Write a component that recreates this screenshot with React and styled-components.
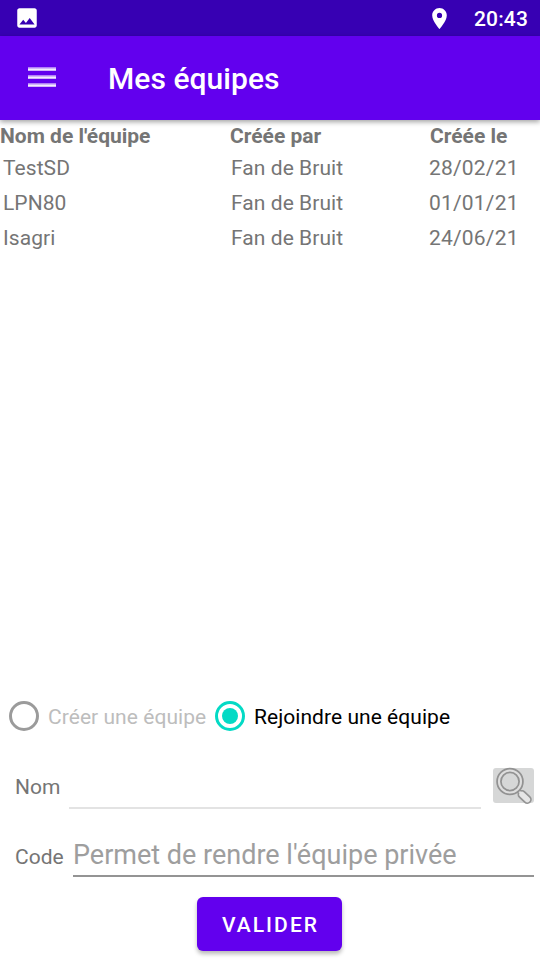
import React from 'react';
import styled, { createGlobalStyle } from 'styled-components';

const GlobalStyle = createGlobalStyle`
  * { box-sizing: border-box; }
  body { margin: 0; background: #fff; font-family: Roboto, sans-serif; }
`;

const Screen = styled.div`
  width: 540px;
  height: 960px;
  display: flex;
  flex-direction: column;
  overflow: hidden;
  background: #fff;
  color: #757575;
  font-size: 21px;
  line-height: 25px;
  white-space: nowrap;
`;

const StatusBar = styled.div`
  height: 36px;
  flex: none;
  display: flex;
  align-items: center;
  padding: 0 12px 0 14px;
  background: #3700b3;
  color: #fff;
`;

const StatusIcon = styled.svg`
  width: ${(p) => p.$size}px;
  height: ${(p) => p.$size}px;
  flex: none;
  fill: #fff;
  margin-left: ${(p) => (p.$end ? 'auto' : '0')};
`;

const Clock = styled.time`
  width: 54px;
  margin-left: 22px;
  padding-top: 2px;
  font-weight: 500;
  letter-spacing: 0.15px;
`;

const AppBar = styled.header`
  height: 84px;
  flex: none;
  display: flex;
  align-items: center;
  padding-left: 28px;
  background: #6200ee;
  box-shadow: 0 2px 5px rgba(0, 0, 0, 0.36);
  z-index: 1;
`;

const MenuIcon = styled.svg`
  width: 28px;
  height: 22px;
  margin-right: 52px;
`;

const Title = styled.h1`
  margin: 2px 0 0;
  color: #fff;
  font-size: 30px;
  line-height: 36px;
  font-weight: 500;
  letter-spacing: 0.05px;
`;

const Table = styled.section`
  flex: 1;
  padding-top: 4px;
`;

const Row = styled.div`
  display: grid;
  grid-template-columns: 228px 198px 1fr;
  height: 35px;
  padding: 5px 0 0 3px;
  letter-spacing: 0.06px;
`;

const DateCell = styled.span`
  letter-spacing: 0.2px;
`;

const HeaderRow = styled.div`
  display: grid;
  grid-template-columns: 230px 200px 1fr;
  height: 27px;
  font-weight: 700;
`;

const Form = styled.form`
  height: 270px;
  flex: none;
  display: flex;
  flex-direction: column;
`;

const RadioGroup = styled.div`
  height: 52px;
  display: flex;
  align-items: center;
  padding-left: 9px;
`;

const RadioOption = styled.div`
  width: ${(p) => p.$width}px;
  display: flex;
  align-items: center;
  gap: 9px;
  color: ${(p) => (p.$checked ? '#000' : '#bdbdbd')};
`;

const RadioText = styled.span`
  padding-top: 2px;
  letter-spacing: 0.05px;
`;

const RadioMark = styled.span`
  width: 30px;
  height: 30px;
  flex: none;
  display: grid;
  place-items: center;
  border: 3px solid ${(p) => (p.$checked ? '#03dac5' : '#9b9b9b')};
  border-radius: 50%;

  &::after {
    content: '';
    width: 16px;
    height: 16px;
    border-radius: 50%;
    background: ${(p) => (p.$checked ? '#03dac5' : 'transparent')};
  }
`;

const Field = styled.div`
  height: ${(p) => p.$height}px;
  display: flex;
  align-items: flex-start;
  padding: 0 6px 0 15px;
`;

const Label = styled.label`
  width: ${(p) => p.$width}px;
  flex: none;
  padding-top: 33px;
`;

const Input = styled.input`
  min-width: 0;
  flex: 1;
  height: ${(p) => p.$height}px;
  padding: ${(p) => p.$top}px 0 0;
  border: 0;
  border-bottom: ${(p) => (p.$muted ? '2px solid #e3e3e3' : '2px solid #949494')};
  border-radius: 0;
  outline: 0;
  background: transparent;
  color: #212121;
  font: 400 27px/32px Roboto, sans-serif;

  &::placeholder {
    color: #9e9e9e;
    opacity: 1;
  }
`;

const SearchButton = styled.button`
  width: 41px;
  height: 35px;
  margin: 26px 0 0 12px;
  flex: none;
  padding: 0;
  border: 0;
  border-radius: 3px;
  background: #d6d7d7;
`;

const SearchIcon = styled.svg`
  display: block;
  width: 41px;
  height: 37px;
  overflow: visible;
`;

const SubmitButton = styled.button`
  width: 145px;
  height: 54px;
  margin: 15px 0 0 197px;
  padding: 2px 0 0 2px;
  border: 0;
  border-radius: 6px;
  background: #6200ee;
  box-shadow: 0 3px 4px rgba(0, 0, 0, 0.28);
  color: #fff;
  font: 500 21px/25px Roboto, sans-serif;
  letter-spacing: 2.05px;
`;

const teams = [
  { name: 'TestSD', author: 'Fan de Bruit', date: '28/02/21' },
  { name: 'LPN80', author: 'Fan de Bruit', date: '01/01/21' },
  { name: 'Isagri', author: 'Fan de Bruit', date: '24/06/21' },
];

export default function App() {
  return (
    <>
      <GlobalStyle />
      <Screen>
        <StatusBar>
          <StatusIcon $size={26} viewBox="0 0 24 24">
            <path d="M21 19V5c0-1.1-.9-2-2-2H5c-1.1 0-2 .9-2 2v14c0 1.1.9 2 2 2h14c1.1 0 2-.9 2-2zM8.500 13.500l2.500 3.010L14.500 12l4.500 6H5l3.500-4.500z" />
          </StatusIcon>
          <StatusIcon $size={25} $end viewBox="0 0 24 24">
            <path d="M12 2C8.130 2 5 5.130 5 9c0 5.250 7 13 7 13s7-7.750 7-13c0-3.870-3.130-7-7-7zm0 9.500a2.500 2.500 0 0 1 0-5 2.500 2.500 0 0 1 0 5z" />
          </StatusIcon>
          <Clock>20:43</Clock>
        </StatusBar>
        <AppBar>
          <MenuIcon viewBox="0 0 28 22" fill="#fff">
            <path opacity=".5" d="M0 0h28v4H0zM0 8h28v4H0zM0 16h28v4H0z" />
            <path opacity=".85" d="M0 1.500h28v2H0zM0 9.500h28v2H0zM0 17.500h28v2H0z" />
          </MenuIcon>
          <Title>Mes équipes</Title>
        </AppBar>
        <Table>
          <HeaderRow>
            <span>Nom de l'équipe</span>
            <span>Créée par</span>
            <span>Créée le</span>
          </HeaderRow>
          {teams.map((team) => (
            <Row key={team.name}>
              <span>{team.name}</span>
              <span>{team.author}</span>
              <DateCell>{team.date}</DateCell>
            </Row>
          ))}
        </Table>
        <Form onSubmit={(e) => e.preventDefault()}>
          <RadioGroup role="radiogroup">
            <RadioOption role="radio" aria-checked="false" $width={206}>
              <RadioMark />
              <RadioText>Créer une équipe</RadioText>
            </RadioOption>
            <RadioOption role="radio" aria-checked="true" $checked $width={240}>
              <RadioMark $checked />
              <RadioText>Rejoindre une équipe</RadioText>
            </RadioOption>
          </RadioGroup>
          <Field $height={70}>
            <Label htmlFor="nom" $width={54}>Nom</Label>
            <Input id="nom" $height={67} $top={23} $muted />
            <SearchButton type="button" aria-label="Rechercher">
              <SearchIcon viewBox="0 0 41 37" fill="none" strokeLinecap="round">
                <path d="M24.500 22L29 26" stroke="#969696" strokeWidth="5" />
                <path d="M29 26.500L34.300 31.500" stroke="#949494" strokeWidth="9" />
                <path d="M25 22.500L29 26" stroke="#dedede" strokeWidth="2" />
                <path d="M29 26.500L34.300 31.500" stroke="#e6e6e6" strokeWidth="5.500" />
                <circle cx="17" cy="13.500" r="11" fill="#d6d7d7" stroke="#929292" strokeWidth="5.600" />
                <circle cx="17" cy="13.500" r="11" stroke="#dedede" strokeWidth="2.100" />
              </SearchIcon>
            </SearchButton>
          </Field>
          <Field $height={70}>
            <Label htmlFor="code" $width={58}>Code</Label>
            <Input id="code" $height={65} $top={22} placeholder="Permet de rendre l'équipe privée" />
          </Field>
          <SubmitButton type="submit">VALIDER</SubmitButton>
        </Form>
      </Screen>
    </>
  );
}
